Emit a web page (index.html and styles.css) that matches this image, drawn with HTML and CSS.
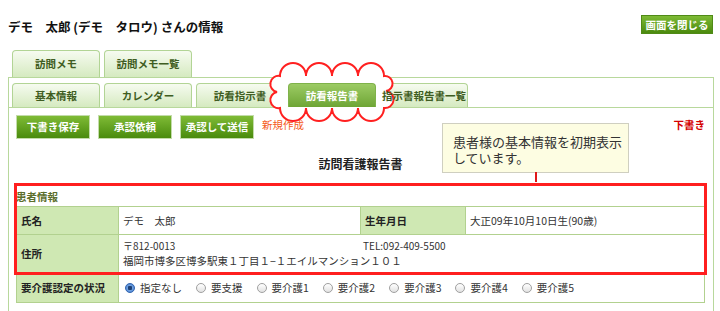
FILE: index.html
```html
<!DOCTYPE html>
<html lang="ja">
<head>
    <meta charset="UTF-8">
    <meta name="viewport" content="width=device-width, initial-scale=1.0">
    <link rel="stylesheet" href="styles.css">
    <title>訪問看護報告書</title>
</head>
<body>
    <div class="header">
        <h1 class="page-title">デモ　太郎 (デモ　タロウ) さんの情報</h1>
        <button class="close-btn">画面を閉じる</button>
    </div>

    <div class="memo-tabs">
        <div class="tab">訪問メモ</div>
        <div class="tab">訪問メモ一覧</div>
    </div>

    <div class="main-box">
        <div class="sub-tabs">
            <div class="tab"><span>基本情報</span></div>
            <div class="tab"><span>カレンダー</span></div>
            <div class="tab"><span>訪看指示書</span></div>
            <div class="tab active"><span>訪看報告書</span></div>
            <div class="tab"><span>指示書報告書一覧</span></div>
        </div>

        <!-- callout cloud round the active tab -->
        <svg class="cloud" width="136" height="68" viewBox="0 0 136 68">
            <path d="M16 18 A1 1 0 0 1 42 18 A1 1 0 0 1 68 18 A1 1 0 0 1 94 18 A1 1 0 0 1 120 18
                     A1 1 0 0 1 122 33 A1 1 0 0 1 120 50
                     A1 1 0 0 1 94 50 A1 1 0 0 1 68 50 A1 1 0 0 1 42 50 A1 1 0 0 1 16 50
                     A1 1 0 0 1 13 34 A1 1 0 0 1 16 18 Z"
                  fill="#fff" stroke="#ff2020" stroke-width="2"/>
        </svg>

        <div class="panel">
            <div class="actions">
                <button class="btn">下書き保存</button>
                <button class="btn">承認依頼</button>
                <button class="btn">承認して送信</button>
                <span class="new-label">新規作成</span>
                <span class="status">下書き</span>
            </div>

            <div class="note">患者様の基本情報を初期表示<br>しています。</div>

            <h2 class="report-title">訪問看護報告書</h2>

            <div class="highlight">
                <div class="caption">患者情報</div>
                <table class="info-table">
                    <colgroup>
                        <col class="c-th">
                        <col class="c-td">
                        <col class="c-th2">
                        <col>
                    </colgroup>
                    <tr class="row-name">
                        <th>氏名</th>
                        <td>デモ　太郎</td>
                        <th>生年月日</th>
                        <td>大正09年10月10日生(90歳)</td>
                    </tr>
                    <tr class="row-addr">
                        <th>住所</th>
                        <td colspan="3">
                            <div class="addr-top">
                                <span class="zip">〒812-0013</span>
                                <span>TEL:092-409-5500</span>
                            </div>
                            <div class="addr-line">福岡市博多区博多駅東１丁目１−１エイルマンション１０１</div>
                        </td>
                    </tr>
                </table>
            </div>

            <table class="info-table care-table">
                <colgroup>
                    <col class="c-th">
                    <col>
                </colgroup>
                <tr>
                    <th>要介護認定の状況</th>
                    <td>
                        <div class="radios">
                            <label><input type="radio" name="care" checked>指定なし</label>
                            <label><input type="radio" name="care">要支援</label>
                            <label><input type="radio" name="care">要介護1</label>
                            <label><input type="radio" name="care">要介護2</label>
                            <label><input type="radio" name="care">要介護3</label>
                            <label><input type="radio" name="care">要介護4</label>
                            <label><input type="radio" name="care">要介護5</label>
                        </div>
                    </td>
                </tr>
            </table>
        </div>
    </div>
</body>
</html>
```

FILE: styles.css
```css
body {
    margin: 0;
    font-family: "Noto Sans CJK JP", "Noto Sans", sans-serif;
    font-size: 10.5px;
    color: #222;
    background-color: #fff;
    overflow: hidden;
}

.header {
    display: flex;
    justify-content: space-between;
    align-items: flex-start;
    height: 20px;
    padding: 15px 7px 0 8px;
}

.page-title {
    margin: 3px 0 0 0;
    font-size: 12.5px;
    line-height: 17px;
    font-weight: bold;
    color: #111;
}

.close-btn {
    width: 72px;
    height: 19px;
    padding: 0;
    font-family: inherit;
    font-size: 10.5px;
    line-height: 17px;
    font-weight: bold;
    color: #fff;
    border: 1px solid #4f8a16;
    background: linear-gradient(#7dba34, #4b8a0e);
    cursor: pointer;
}

/* tabs */
.memo-tabs {
    display: flex;
    gap: 4px;
    height: 27px;
    margin-top: 15px;
    padding-left: 12px;
}

.tab {
    width: 88px;
    box-sizing: border-box;
    text-align: center;
    font-weight: bold;
    color: #3f5d22;
    border: 1px solid #b2d495;
    border-bottom: none;
    border-radius: 4px 4px 0 0;
    background: linear-gradient(#f6fbf0, #d5eac0);
    white-space: nowrap;
}

.memo-tabs .tab {
    height: 27px;
    line-height: 26px;
}

.main-box {
    position: relative;
    margin: 0 6px 0 8px;
    border: 1px solid #b8d89c;
    border-bottom: none;
    height: 240px;
}

.sub-tabs {
    display: flex;
    gap: 4px;
    height: 24px;
    padding: 5px 0 0 3px;
    border-bottom: 1px solid #b8d89c;
}

.sub-tabs .tab {
    height: 24px;
    line-height: 23px;
}

/* tab labels stay readable above the cloud */
.sub-tabs .tab span {
    position: relative;
    z-index: 2;
}

.sub-tabs .tab.active {
    position: relative;
    z-index: 2;
    color: #fff;
    border-color: #7fb24a;
    background: linear-gradient(#9ccb64, #6ea535);
}

.cloud {
    position: absolute;
    left: 255px;
    top: -20px;
    z-index: 1;
}

/* panel */
.panel {
    position: relative;
    padding: 0 8px 0 7px;
}

.actions {
    display: flex;
    align-items: flex-start;
    gap: 8px;
    height: 24px;
    padding-top: 7px;
}

.btn {
    width: 74px;
    height: 24px;
    padding: 0;
    font-family: inherit;
    font-size: 10.5px;
    line-height: 22px;
    font-weight: bold;
    color: #fff;
    border: 1px solid #c3dcaa;
    background: linear-gradient(#7fbb36, #4a8b0d);
    cursor: pointer;
}

.new-label {
    position: relative;
    z-index: 2;
    margin-top: 3px;
    color: #f45a22;
    line-height: 14px;
}

.status {
    margin: 3px 0 0 auto;
    font-weight: bold;
    color: #d40000;
    line-height: 14px;
}

.note {
    position: absolute;
    left: 433px;
    top: 15px;
    width: 187px;
    height: 50px;
    box-sizing: border-box;
    padding: 10px 0 0 10px;
    font-size: 13px;
    line-height: 16px;
    color: #333;
    background-color: #fdfde2;
    border: 1px solid #cfcfc0;
    z-index: 3;
}

.note::after {
    content: "";
    position: absolute;
    left: 92px;
    top: 100%;
    width: 2px;
    height: 10px;
    background-color: #e01818;
}

.report-title {
    margin: 17px 0 0 0;
    text-align: center;
    font-size: 12px;
    line-height: 16px;
    font-weight: bold;
    color: #222;
}

.highlight {
    position: relative;
    margin-top: 18px;
}

.highlight::after {
    content: "";
    position: absolute;
    left: -2px;
    right: -2px;
    top: -7px;
    bottom: -2px;
    border: 3px solid #ff1f1f;
    pointer-events: none;
}

.caption {
    font-weight: bold;
    color: #5c6e2c;
    line-height: 14px;
    margin-bottom: 2px;
}

.info-table {
    width: 100%;
    table-layout: fixed;
    border-collapse: collapse;
}

.info-table th,
.info-table td {
    border: 1px solid #b2d18f;
    text-align: left;
    padding: 0 4px;
    font-size: 10.5px;
}

.info-table th {
    background-color: #cfe8b3;
    font-weight: bold;
    color: #222;
}

.info-table td {
    color: #333;
}

.c-th {
    width: 102px;
}

.c-td {
    width: 242px;
}

.c-th2 {
    width: 105px;
}

.row-name th,
.row-name td {
    height: 27px;
}

.row-addr th,
.row-addr td {
    height: 37px;
}

.addr-top {
    display: flex;
    font-size: 10px;
    line-height: 15px;
}

.zip {
    width: 240px;
}

.addr-line {
    line-height: 16px;
}

.care-table th,
.care-table td {
    border-top: none;
    height: 29px;
}

.radios {
    display: flex;
    align-items: center;
}

.radios label {
    display: flex;
    align-items: center;
    margin-right: 12px;
}

.radios input {
    appearance: none;
    width: 10px;
    height: 10px;
    margin: 0 5px 0 2px;
    border: 1px solid #a0a0a0;
    border-radius: 50%;
    background: linear-gradient(#fff, #e2e2e2);
}

.radios input:checked {
    border-color: #3566b0;
    background: radial-gradient(circle, #1d3f73 0 2px, #6fa0e0 2.5px, #3a76c9 100%);
}
```
